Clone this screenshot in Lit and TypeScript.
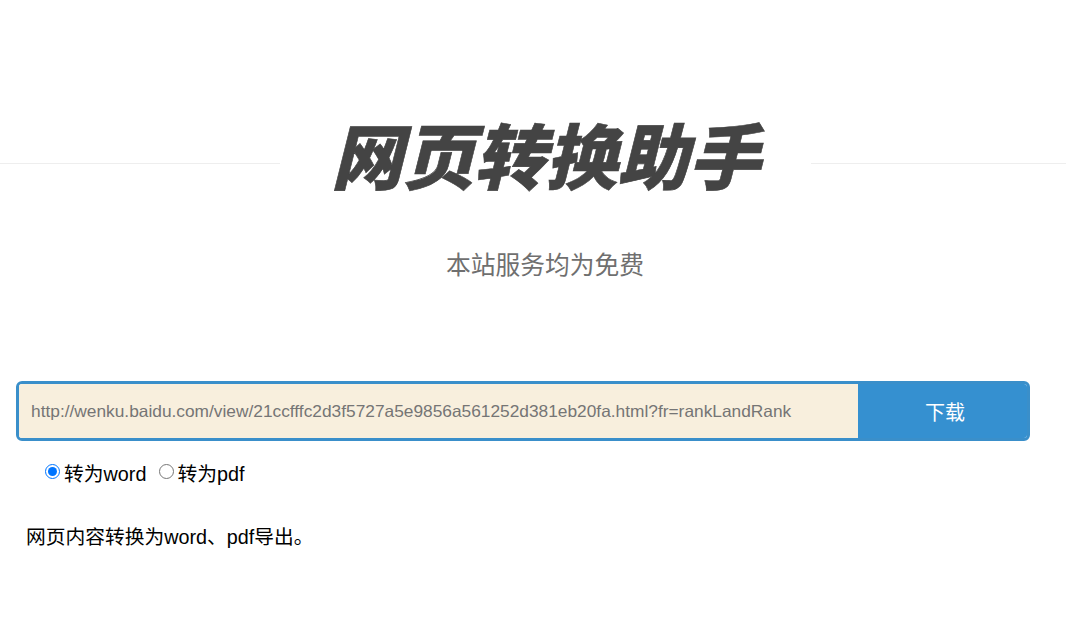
import { LitElement, html, css } from "lit";
import { customElement } from "lit/decorators.js";

@customElement("app-root")
export class AppRoot extends LitElement {
  static styles = css`
    :host {
      display: block;
      width: 1066px;
      height: 632px;
      background: #fff;
      overflow: hidden;
      font-family: "Liberation Sans", "Noto Sans CJK SC", sans-serif;
      color: #000;
    }
    .hero {
      display: flex;
      align-items: center;
      padding-top: 118px;
      height: 90px;
    }
    .line {
      height: 1px;
      background: #eeeeee;
    }
    .line.left { width: 280px; }
    .line.right { flex: 1; }
    .title {
      width: 531px;
      margin: 0;
      padding-bottom: 7px;
      text-align: center;
      font-size: 71.5px;
      line-height: 81px;
      font-weight: 900;
      font-style: italic;
      color: #444444;
      -webkit-text-stroke: 0.6px #444444;
      white-space: nowrap;
    }
    .sub {
      margin: 34px 0 0;
      text-align: center;
      padding-left: 24px;
      font-size: 24.75px;
      line-height: 48px;
      color: #6f6f6f;
    }
    .bar {
      display: flex;
      box-sizing: border-box;
      width: 1014px;
      height: 60px;
      margin: 91px 0 0 16px;
      border: 3px solid #3a8fca;
      border-radius: 6px;
      overflow: hidden;
    }
    .url {
      flex: 1;
      min-width: 0;
      box-sizing: border-box;
      border: 0;
      outline: 0;
      padding: 0 12px;
      background: #f8efdd;
      font: 17.32px "Liberation Sans", sans-serif;
      color: #757575;
    }
    .url::placeholder { color: #757575; opacity: 1; }
    .btn {
      width: 169px;
      border: 0;
      padding: 0 0 0 5px;
      background: #3590d0;
      color: #fff;
      font-family: inherit;
      font-size: 20px;
    }
    .opts {
      display: flex;
      align-items: center;
      margin: 17px 0 0 45px;
      height: 28px;
      font-size: 19.8px;
    }
    .opts label { display: flex; align-items: center; }
    .opts label + label { margin-left: 13px; }
    .opts input {
      width: 15px;
      height: 15px;
      margin: 0 4px 1px 0;
    }
    .opts label + label input { margin-right: 3px; }
    .desc {
      margin: 37px 0 0 26px;
      font-size: 19.75px;
      line-height: 28px;
    }
  `;

  render() {
    return html`
      <div class="hero">
        <div class="line left"></div>
        <h1 class="title">网页转换助手</h1>
        <div class="line right"></div>
      </div>
      <p class="sub">本站服务均为免费</p>
      <div class="bar">
        <input class="url" type="text" placeholder="http://wenku.baidu.com/view/21ccfffc2d3f5727a5e9856a561252d381eb20fa.html?fr=rankLandRank" />
        <button class="btn">下载</button>
      </div>
      <div class="opts">
        <label><input type="radio" name="fmt" checked />转为word</label>
        <label><input type="radio" name="fmt" />转为pdf</label>
      </div>
      <p class="desc">网页内容转换为word、pdf导出。</p>
    `;
  }
}
